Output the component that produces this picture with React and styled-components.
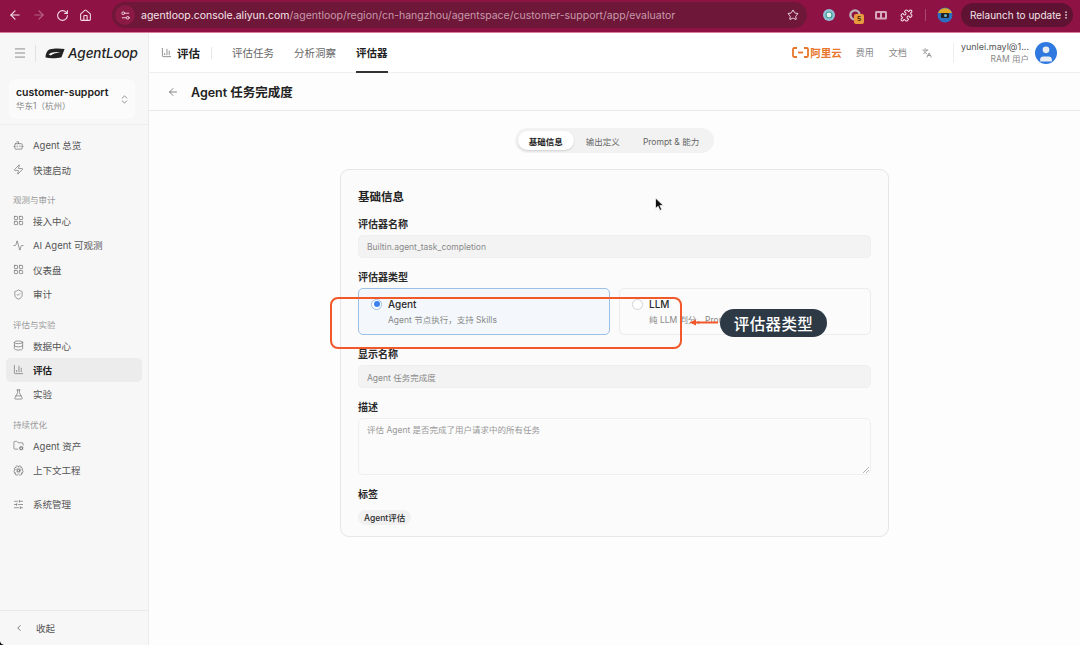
import React from 'react';
import styled, { createGlobalStyle } from 'styled-components';
import {
  Activity, ArrowLeft, ArrowRight, BrainCog, ChartColumn, ChevronLeft, ChevronsUpDown, Database, EllipsisVertical,
  FlaskConical, FolderCog, House, Languages, LayoutGrid, Menu, Puzzle, RotateCw, Settings2, ShieldCheck, SlidersHorizontal,
  Star, Bot, Zap, User,
} from 'lucide-react';

const GlobalStyle = createGlobalStyle`
  html, body { margin: 0; padding: 0; background: #111; }
  body { font-family: Inter, "Noto Sans CJK SC", "Liberation Sans", sans-serif; color: #1f1f1f; }
  * { box-sizing: border-box; }
`;

const Shell = styled.div`
  position: relative;
  width: 1080px;
  height: 645px;
  overflow: hidden;
  display: flex;
  flex-direction: column;
  background: #fdfdfd;
  border-bottom-left-radius: 5px;
`;

/* browser toolbar */
const BrowserBar = styled.div`
  height: 33px;
  flex: none;
  display: flex;
  align-items: center;
  background: #8f1244;
  border-bottom: 1px solid #d97b9d;
  padding: 0 4px 2px 8px;
  color: #f3dce5;
`;
const NavButtons = styled.div`
  display: flex;
  align-items: center;
  gap: 10px;
  width: 104px;
  flex: none;
`;
const NavSlot = styled.span`
  display: flex;
  opacity: ${(p) => (p.$dim ? 0.4 : 1)};
`;
const Omnibox = styled.div`
  width: 695px;
  height: 26px;
  flex: none;
  display: flex;
  align-items: center;
  border-radius: 13px;
  background: #6f1738;
  padding: 0 8px 0 3px;
  font-size: 10.5px;
`;
const SiteBadge = styled.span`
  width: 20px;
  height: 20px;
  border-radius: 50%;
  background: #8a1a45;
  display: flex;
  align-items: center;
  justify-content: center;
  margin-right: 6px;
`;
const UrlHost = styled.span`
  color: #f5e4ea;
`;
const UrlPath = styled.span`
  color: #c79aab;
  flex: 1;
`;
const ExtensionTray = styled.div`
  display: flex;
  align-items: center;
  flex: 1;
  padding-left: 15px;
`;
const ExtensionSlot = styled.span`
  position: relative;
  display: flex;
  width: ${(p) => p.$w || 26}px;
  flex: none;
`;
const CountBadge = styled.span`
  position: absolute;
  left: 6px;
  top: 6px;
  width: 10px;
  height: 10px;
  border-radius: 2px;
  background: #e89a3c;
  color: #4a2600;
  font-size: 6.5px;
  font-weight: 700;
  text-align: center;
  line-height: 10px;
`;
const TrayDivider = styled.span`
  width: 1px;
  height: 12px;
  background: #a84a6e;
  margin: 0 11px 0 1px;
`;
const RelaunchButton = styled.div`
  margin-left: 8px;
  height: 24px;
  width: 112px;
  flex: none;
  border-radius: 12px;
  background: #5f1232;
  display: flex;
  align-items: center;
  justify-content: space-between;
  padding: 0 2px 0 9px;
  font-size: 10px;
  color: #f3e3e9;
  white-space: nowrap;
`;

const Body = styled.div`
  flex: 1;
  display: flex;
  min-height: 0;
`;

/* sidebar */
const Sidebar = styled.aside`
  width: 149px;
  flex: none;
  display: flex;
  flex-direction: column;
  background: #f7f7f7;
  border-right: 1px solid #ececec;
`;
const BrandRow = styled.div`
  height: 40px;
  flex: none;
  display: flex;
  align-items: center;
  padding-left: 13px;
  color: #777;
`;
const BrandDivider = styled.span`
  width: 1px;
  height: 17px;
  background: #e2e2e2;
  margin: 0 9px 0 8px;
`;
const BrandName = styled.span`
  font-size: 13.5px;
  font-style: italic;
  font-weight: 500;
  color: #222;
  margin-left: 3px;
  letter-spacing: -0.1px;
`;
const WorkspaceCard = styled.div`
  margin: 6px 13px 0 9px;
  height: 40px;
  flex: none;
  border-radius: 6px;
  background: #fbfbfb;
  display: flex;
  align-items: center;
  justify-content: space-between;
  padding: 0 5px 0 7px;
  color: #888;
`;
const WorkspaceName = styled.div`
  font-size: 10.5px;
  font-weight: 600;
  color: #222;
  line-height: 14px;
`;
const WorkspaceRegion = styled.div`
  font-size: 8.5px;
  color: #888;
  line-height: 13px;
`;
const SideDivider = styled.div`
  height: 1px;
  flex: none;
  background: #eeeeee;
  margin-top: 5px;
`;
const NavList = styled.nav`
  flex: 1;
  padding: 8px 6px 0;
`;
const NavItem = styled.div`
  height: 24.4px;
  display: flex;
  align-items: center;
  gap: 9px;
  padding-left: 7px;
  border-radius: 5px;
  font-size: 9.5px;
  color: ${(p) => (p.$active ? '#222' : '#555')};
  font-weight: ${(p) => (p.$active ? 600 : 400)};
  background: ${(p) => (p.$active ? '#ececec' : 'transparent')};
  margin-bottom: ${(p) => (p.$gap ? 10 : 0)}px;
  svg { flex: none; color: #666; }
`;
const NavSection = styled.div`
  height: 21px;
  margin-top: 6px;
  padding: 2px 0 0 7px;
  display: flex;
  align-items: center;
  font-size: 8.5px;
  color: #999;
`;
const SideFooter = styled.div`
  height: 35px;
  flex: none;
  margin-bottom: 0;
  border-top: 1px solid #e9e9e9;
  display: flex;
  align-items: center;
  gap: 12px;
  padding-left: 14px;
  font-size: 9.5px;
  color: #555;
  svg { color: #666; }
`;

/* main area */
const Main = styled.main`
  flex: 1;
  display: flex;
  flex-direction: column;
  min-width: 0;
`;
const TopBar = styled.header`
  height: 40px;
  flex: none;
  display: flex;
  align-items: stretch;
  background: #fff;
  border-bottom: 1px solid #efefef;
  padding: 0 23px 0 12px;
`;
const TopTitle = styled.div`
  display: flex;
  align-items: center;
  gap: 5px;
  font-size: 11.5px;
  font-weight: 600;
  color: #222;
  svg { color: #555; }
`;
const TitleDivider = styled.span`
  width: 1px;
  height: 12px;
  background: #e8e8e8;
  margin: 0 20px 0 11px;
  align-self: center;
`;
const TopTab = styled.div`
  display: flex;
  align-items: center;
  margin-right: 20px;
  font-size: 10.5px;
  font-weight: ${(p) => (p.$active ? 600 : 400)};
  color: ${(p) => (p.$active ? '#222' : '#666')};
  border-bottom: 2px solid ${(p) => (p.$active ? '#333' : 'transparent')};
  margin-bottom: -1px;
`;
const TopRight = styled.div`
  margin-left: auto;
  display: flex;
  align-items: center;
  font-size: 9px;
  color: #888;
`;
const AliyunMark = styled.span`
  display: flex;
  align-items: center;
  gap: 1px;
  font-size: 10.5px;
  font-weight: 700;
  color: #e8762c;
  margin-right: 14px;
`;
const TopLink = styled.span`
  margin-right: 15px;
  display: flex;
`;
const UserDivider = styled.span`
  width: 1px;
  height: 20px;
  background: #eee;
  margin: 0 7px 0 6px;
`;
const UserText = styled.div`
  text-align: right;
  margin-right: 6px;
`;
const UserMail = styled.div`
  font-size: 9px;
  line-height: 13px;
  color: #555;
`;
const UserRole = styled.div`
  font-size: 8.5px;
  line-height: 13px;
  color: #888;
`;
const Avatar = styled.span`
  width: 22px;
  height: 22px;
  border-radius: 50%;
  background: #2f78e0;
  color: #e9edf2;
  display: flex;
  align-items: flex-end;
  justify-content: center;
  overflow: hidden;
`;
const PageHead = styled.div`
  height: 38px;
  flex: none;
  display: flex;
  align-items: center;
  gap: 12px;
  padding-left: 18px;
  background: #fdfdfd;
  border-bottom: 1px solid #e9e9e9;
  font-size: 12.5px;
  font-weight: 600;
  color: #222;
  svg { color: #666; }
`;
const Content = styled.div`
  flex: 1;
  display: flex;
  flex-direction: column;
  align-items: center;
  padding-top: 17px;
`;
const Segments = styled.div`
  height: 25px;
  display: flex;
  align-items: center;
  gap: 1px;
  border-radius: 13px;
  background: #f2f2f2;
  padding: 0 4px 0 3px;
`;
const Segment = styled.div`
  height: 19px;
  display: flex;
  align-items: center;
  padding: 0 ${(p) => p.$pad || 11}px;
  border-radius: 10px;
  font-size: 8.5px;
  font-weight: ${(p) => (p.$active ? 600 : 400)};
  color: ${(p) => (p.$active ? '#222' : '#666')};
  background: ${(p) => (p.$active ? '#fff' : 'transparent')};
  box-shadow: ${(p) => (p.$active ? '0 1px 2px rgba(0,0,0,.14)' : 'none')};
`;
const Card = styled.section`
  width: 549px;
  height: 368px;
  margin-top: 16px;
  padding: 19px 17px 0;
  border: 1px solid #e6e6e6;
  border-radius: 9px;
  background: #fbfbfb;
`;
const CardTitle = styled.h2`
  margin: 0 0 12px;
  font-size: 11.5px;
  line-height: 16px;
  font-weight: 600;
  color: #222;
`;
const Label = styled.div`
  font-size: 10px;
  line-height: 14px;
  font-weight: 600;
  color: #2a2a2a;
  margin-bottom: 4px;
`;
const Input = styled.div`
  height: 23px;
  display: flex;
  align-items: center;
  padding: 0 8px;
  border-radius: 5px;
  border: 1px solid #efefef;
  background: #f3f3f3;
  font-size: 8.5px;
  color: #8a8a8a;
  margin-bottom: 12px;
`;
const TextArea = styled.div`
  position: relative;
  height: 57px;
  padding: 5px 8px;
  border-radius: 5px;
  border: 1px solid #efefef;
  background: #fbfbfb;
  font-size: 8.5px;
  line-height: 13px;
  color: #999;
  margin-bottom: 12px;
`;
const ResizeGrip = styled.svg`
  position: absolute;
  right: 1px;
  bottom: 1px;
`;
const OptionRow = styled.div`
  display: grid;
  grid-template-columns: 1fr 1fr;
  gap: 9px;
  margin-bottom: 12px;
`;
const OptionCard = styled.div`
  height: 47px;
  padding: 8px 12px;
  border-radius: 5px;
  border: 1px solid ${(p) => (p.$active ? '#9cbfe8' : '#ececec')};
  background: ${(p) => (p.$active ? '#f4f8fd' : '#fbfbfb')};
`;
const OptionHead = styled.div`
  display: flex;
  align-items: center;
  gap: 6px;
  font-size: 10px;
  line-height: 14px;
  font-weight: 500;
  color: #2a2a2a;
`;
const Radio = styled.span`
  width: 11px;
  height: 11px;
  border-radius: 50%;
  background: #fff;
  border: 1px solid ${(p) => (p.$on ? '#9cbfe8' : '#d4d4d4')};
  display: flex;
  align-items: center;
  justify-content: center;
  &::after {
    content: '';
    width: 6px;
    height: 6px;
    border-radius: 50%;
    background: ${(p) => (p.$on ? '#3b82f0' : 'transparent')};
  }
`;
const OptionHint = styled.div`
  margin: 3px 0 0 17px;
  font-size: 8.5px;
  line-height: 13px;
  color: #888;
  white-space: nowrap;
`;
const Tag = styled.span`
  display: inline-flex;
  align-items: center;
  height: 15px;
  padding: 0 6px;
  border-radius: 8px;
  background: #f1f1f1;
  font-size: 8.5px;
  font-weight: 500;
  color: #2a2a2a;
`;

/* screenshot annotations drawn over the page */
const Highlight = styled.div`
  position: absolute;
  left: 330px;
  top: 297px;
  width: 352px;
  height: 52px;
  border: 2.5px solid #f2582a;
  border-radius: 8px;
`;
const CalloutArrow = styled.svg`
  position: absolute;
  left: 688px;
  top: 317px;
`;
const Callout = styled.div`
  position: absolute;
  left: 720px;
  top: 309px;
  width: 107px;
  height: 28px;
  border-radius: 14px;
  background: #2d3a46;
  color: #fff;
  font-size: 15.5px;
  font-weight: 500;
  display: flex;
  align-items: center;
  justify-content: center;
  letter-spacing: 0.4px;
`;
const Pointer = styled.svg`
  position: absolute;
  left: 654px;
  top: 197px;
`;

const LogoMark = () => (
  <svg width="20" height="11" viewBox="0 0 20 11">
    <path d="M5 1.2C9 .2 15 .2 19.6 1 L16.5 9.2C12 10.4 5 10.6 .6 9.6 C.2 7 2 2 5 1.2Z" fill="#222" />
    <path d="M3.6 6.2C7 3.8 11.5 3.4 15.5 4.4 C12 4.6 8 5.4 5.6 7.4Z" fill="#f7f7f7" />
  </svg>
);

const AliyunIcon = () => (
  <svg width="17" height="11" viewBox="0 0 17 11" fill="none" stroke="#e8762c" strokeWidth="1.8">
    <path d="M5 1H2.2A1.2 1.2 0 0 0 1 2.2v6.6A1.2 1.2 0 0 0 2.2 10H5" />
    <path d="M12 1h2.8A1.2 1.2 0 0 1 16 2.2v6.6A1.2 1.2 0 0 1 14.8 10H12" />
    <path d="M6 5.5h5" />
  </svg>
);

const ChromeExtA = () => (
  <svg width="14" height="14" viewBox="0 0 14 14">
    <circle cx="7" cy="7" r="6" fill="#8fc0d8" />
    <circle cx="7" cy="7" r="3" fill="#e6f1f3" stroke="#3c9a8c" strokeWidth="1.2" />
  </svg>
);
const ChromeExtB = () => (
  <svg width="14" height="14" viewBox="0 0 14 14">
    <circle cx="7" cy="7" r="4.6" fill="none" stroke="#b9b4b8" strokeWidth="2.4" />
  </svg>
);
const ChromeExtC = () => (
  <svg width="14" height="14" viewBox="0 0 14 14">
    <rect x="1" y="3" width="12" height="8.5" rx="1.5" fill="#d8a9bb" />
    <rect x="3" y="5" width="3" height="4.5" fill="#8f1244" />
    <rect x="8" y="5" width="3" height="4.5" fill="#8f1244" />
  </svg>
);
const ProfilePic = () => (
  <svg width="16" height="16" viewBox="0 0 16 16">
    <circle cx="8" cy="8" r="7.5" fill="#2a6fc0" />
    <path d="M1 6A7.5 7.5 0 0 1 15 6Z" fill="#e5a823" />
    <rect x="4" y="6" width="8" height="5" rx="1" fill="#222" />
    <circle cx="8.5" cy="8.5" r="1.5" fill="#6fb0c8" />
  </svg>
);

const groups = [
  { items: [{ icon: Bot, label: 'Agent 总览' }, { icon: Zap, label: '快速启动' }] },
  {
    title: '观测与审计',
    items: [
      { icon: LayoutGrid, label: '接入中心' },
      { icon: Activity, label: 'AI Agent 可观测' },
      { icon: LayoutGrid, label: '仪表盘' },
      { icon: ShieldCheck, label: '审计' },
    ],
  },
  {
    title: '评估与实验',
    items: [
      { icon: Database, label: '数据中心' },
      { icon: ChartColumn, label: '评估', active: true },
      { icon: FlaskConical, label: '实验' },
    ],
  },
  {
    title: '持续优化',
    items: [
      { icon: FolderCog, label: 'Agent 资产' },
      { icon: BrainCog, label: '上下文工程', gap: true },
      { icon: SlidersHorizontal, label: '系统管理' },
    ],
  },
];

export default function App() {
  return (
    <Shell>
      <GlobalStyle />
      <BrowserBar>
        <NavButtons>
          <NavSlot><ArrowLeft size={14} /></NavSlot>
          <NavSlot $dim><ArrowRight size={14} /></NavSlot>
          <NavSlot><RotateCw size={13} /></NavSlot>
          <NavSlot><House size={13} /></NavSlot>
        </NavButtons>
        <Omnibox>
          <SiteBadge><Settings2 size={11} /></SiteBadge>
          <UrlHost>agentloop.console.aliyun.com</UrlHost>
          <UrlPath>/agentloop/region/cn-hangzhou/agentspace/customer-support/app/evaluator</UrlPath>
          <Star size={12} />
        </Omnibox>
        <ExtensionTray>
          <ExtensionSlot><ChromeExtA /></ExtensionSlot>
          <ExtensionSlot><ChromeExtB /><CountBadge>5</CountBadge></ExtensionSlot>
          <ExtensionSlot><ChromeExtC /></ExtensionSlot>
          <ExtensionSlot $w={24}><Puzzle size={13} /></ExtensionSlot>
          <TrayDivider />
          <ExtensionSlot $w={16}><ProfilePic /></ExtensionSlot>
          <RelaunchButton>
            Relaunch to update
            <EllipsisVertical size={12} />
          </RelaunchButton>
        </ExtensionTray>
      </BrowserBar>

      <Body>
        <Sidebar>
          <BrandRow>
            <Menu size={14} strokeWidth={1.4} />
            <BrandDivider />
            <LogoMark />
            <BrandName>AgentLoop</BrandName>
          </BrandRow>
          <WorkspaceCard>
            <div>
              <WorkspaceName>customer-support</WorkspaceName>
              <WorkspaceRegion>华东1（杭州）</WorkspaceRegion>
            </div>
            <ChevronsUpDown size={11} />
          </WorkspaceCard>
          <SideDivider />
          <NavList>
            {groups.map((group, i) => (
              <React.Fragment key={i}>
                {group.title && <NavSection>{group.title}</NavSection>}
                {group.items.map((item) => (
                  <NavItem key={item.label} $active={item.active} $gap={item.gap}>
                    <item.icon size={11} strokeWidth={1.4} />
                    {item.label}
                  </NavItem>
                ))}
              </React.Fragment>
            ))}
          </NavList>
          <SideFooter>
            <ChevronLeft size={10} />
            收起
          </SideFooter>
        </Sidebar>

        <Main>
          <TopBar>
            <TopTitle>
              <ChartColumn size={11} strokeWidth={1.4} />
              评估
            </TopTitle>
            <TitleDivider />
            <TopTab>评估任务</TopTab>
            <TopTab>分析洞察</TopTab>
            <TopTab $active>评估器</TopTab>
            <TopRight>
              <AliyunMark><AliyunIcon />阿里云</AliyunMark>
              <TopLink>费用</TopLink>
              <TopLink>文档</TopLink>
              <TopLink><Languages size={10} /></TopLink>
              <UserDivider />
              <UserText>
                <UserMail>yunlei.mayl@1...</UserMail>
                <UserRole>RAM 用户</UserRole>
              </UserText>
              <Avatar><User size={20} fill="currentColor" strokeWidth={0} /></Avatar>
            </TopRight>
          </TopBar>
          <PageHead>
            <ArrowLeft size={12} strokeWidth={1.6} />
            Agent 任务完成度
          </PageHead>
          <Content>
            <Segments>
              <Segment $active>基础信息</Segment>
              <Segment>输出定义</Segment>
              <Segment>Prompt &amp; 能力</Segment>
            </Segments>
            <Card>
              <CardTitle>基础信息</CardTitle>
              <Label>评估器名称</Label>
              <Input>Builtin.agent_task_completion</Input>
              <Label>评估器类型</Label>
              <OptionRow>
                <OptionCard $active>
                  <OptionHead><Radio $on />Agent</OptionHead>
                  <OptionHint>Agent 节点执行，支持 Skills</OptionHint>
                </OptionCard>
                <OptionCard>
                  <OptionHead><Radio />LLM</OptionHead>
                  <OptionHint>纯 LLM 判分，Prompt 驱动</OptionHint>
                </OptionCard>
              </OptionRow>
              <Label>显示名称</Label>
              <Input>Agent 任务完成度</Input>
              <Label>描述</Label>
              <TextArea>
                评估 Agent 是否完成了用户请求中的所有任务
                <ResizeGrip width="7" height="7" viewBox="0 0 7 7" stroke="#999" strokeWidth="0.7">
                  <path d="M1 7 7 1M4 7 7 4" />
                </ResizeGrip>
              </TextArea>
              <Label>标签</Label>
              <Tag>Agent评估</Tag>
            </Card>
          </Content>
        </Main>
      </Body>

      <Highlight />
      <CalloutArrow width="32" height="12" viewBox="0 0 32 12">
        <path d="M30 5.5H8" stroke="#f2582a" strokeWidth="2" />
        <path d="M1.5 5.5 8 2.5v6Z" fill="#f2582a" />
      </CalloutArrow>
      <Callout>评估器类型</Callout>
      <Pointer width="10" height="15" viewBox="0 0 10 15">
        <path d="M1.5 1v10.5l2.6-2.3 1.8 4.2 1.8-.8-1.8-4.1h3.4Z" fill="#111" stroke="#fff" strokeWidth="0.7" />
      </Pointer>
    </Shell>
  );
}
